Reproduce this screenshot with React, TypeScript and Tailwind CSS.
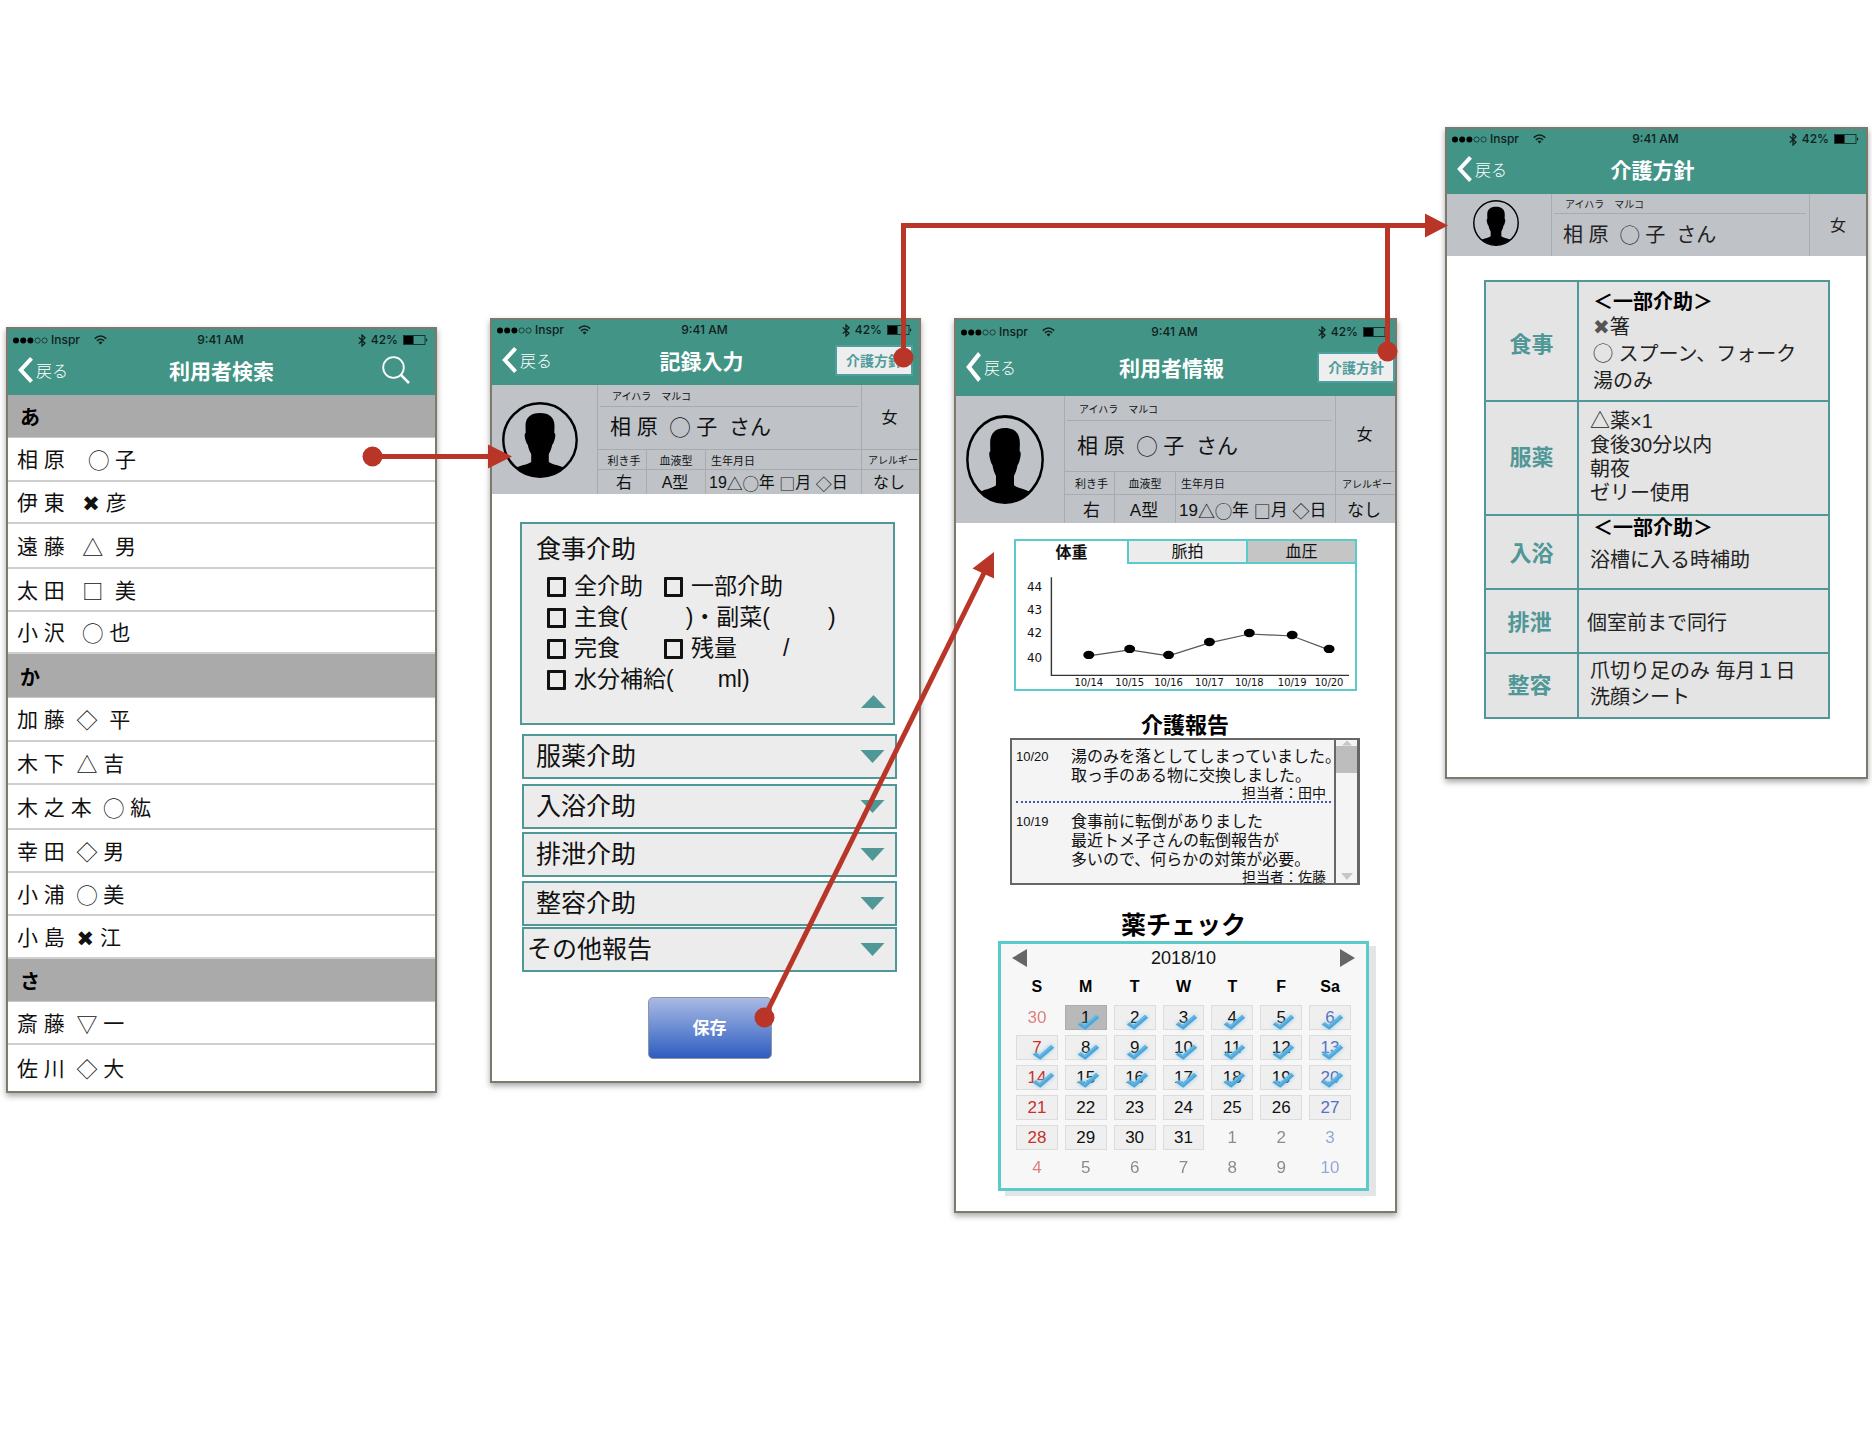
import React, { useId, useState } from "react";

const LATIN = "font-['Liberation_Sans','Noto_Sans_CJK_JP',sans-serif]";
const GLYPHS = "font-['Noto_Sans_CJK_JP','DejaVu_Sans',sans-serif]";
const FRAME = "flex flex-col border-2 border-[#7d796d] bg-white shadow-[0_3px_6px_rgba(0,0,0,0.35)]";

/* Placeholder symbols in names and dates are drawn from the Japanese face. */
function Marked({ text }: { text: string }) {
  return (
    <>
      {text.split(/([◯△□◇▽✖])/).map((part, i) =>
        /[◯△□◇▽✖]/.test(part) ? (
          <span key={i} className={GLYPHS}>
            {part}
          </span>
        ) : (
          part
        ),
      )}
    </>
  );
}

function StatusBar() {
  return (
    <div className="grid grid-cols-[1fr_auto_1fr] items-center pr-[7px] pl-[5px] font-['Inter',sans-serif] text-[12px] leading-[16px] font-medium text-[#10201d]">
      <div className="flex items-center">
        <svg viewBox="0 0 35 7" className="mr-[3px] h-[7px] w-[35px]" aria-hidden="true">
          <circle cx="3" cy="3.5" r="3" />
          <circle cx="10.2" cy="3.5" r="3" />
          <circle cx="17.4" cy="3.5" r="3" />
          <circle cx="24.6" cy="3.5" r="2.6" fill="none" stroke="currentColor" strokeWidth="0.7" />
          <circle cx="31.6" cy="3.5" r="2.6" fill="none" stroke="currentColor" strokeWidth="0.7" />
        </svg>
        Inspr
        <svg viewBox="0 0 13 10" className="ml-[14px] h-[10px] w-[13px]" fill="none" stroke="currentColor" strokeWidth="1.6" aria-hidden="true">
          <path d="M0.8 3.6Q6.5-1.6 12.2 3.6" />
          <path d="M2.9 5.9Q6.5 2.6 10.1 5.9" />
          <path d="M6.5 9.6L4.5 7.4Q6.5 5.8 8.5 7.4Z" fill="currentColor" stroke="none" />
        </svg>
      </div>
      <span>9:41 AM</span>
      <div className="flex items-center justify-end">
        <svg viewBox="0 0 8 13" className="mr-[5px] h-[13px] w-[8px]" fill="none" stroke="currentColor" strokeWidth="1.3" aria-hidden="true">
          <path d="M0.8 3.4L7 9.2L4 12V1L7 3.8L0.8 9.6" />
        </svg>
        42%
        <svg viewBox="0 0 25 10" className="ml-[5px] h-[10px] w-[25px]" aria-hidden="true">
          <rect x="0.5" y="0.5" width="21.5" height="9" fill="none" stroke="currentColor" strokeWidth="0.8" />
          <rect x="1" y="1" width="9.5" height="8" fill="#000" />
          <path d="M23.2 3.2Q25.4 5 23.2 6.8Z" />
        </svg>
      </div>
    </div>
  );
}

function TopBar({
  title,
  tall,
  offset,
  children,
}: {
  title: string;
  tall?: boolean;
  offset?: boolean;
  children?: React.ReactNode;
}) {
  return (
    <header className={`flex flex-col bg-[#429486] ${tall ? "h-[76px] pt-[4px] pb-[2px]" : offset ? "h-[65px] pt-[2px] pb-[3px]" : "h-[66px] pt-[3px] pb-[3px]"}`}>
      <StatusBar />
      <div className="grid flex-1 grid-cols-[1fr_auto_1fr] items-center text-white">
        <a href="#back" className="flex items-center gap-[3px] pl-[10px] text-[16px] leading-none font-light">
          <svg viewBox="0 0 15 26" preserveAspectRatio="none" className={`w-[15px] ${tall ? "h-[30px]" : "h-[26px]"}`} fill="none" stroke="#fff" strokeWidth="4" aria-hidden="true">
            <path d="M13.5 1.4L2.8 13L13.5 24.6" />
          </svg>
          戻る
        </a>
        <h1 className={`text-[21px] leading-none font-bold ${offset ? "pr-2" : ""}`}>{title}</h1>
        <div className="flex justify-end">{children}</div>
      </div>
    </header>
  );
}

function PolicyButton() {
  return (
    <button type="button" className="h-[31px] w-[78px] border-2 border-[#4d9fa0] bg-[#eeeeee] text-[14px] leading-none font-bold text-[#4f9d9b]">
      介護方針
    </button>
  );
}

function Avatar({ className }: { className: string }) {
  const clip = useId();
  return (
    <svg viewBox="0 0 76 76" preserveAspectRatio="none" className={className} role="img" aria-label="相原さん">
      <clipPath id={clip}>
        <circle cx="38" cy="38" r="36.5" />
      </clipPath>
      <g clipPath={`url(#${clip})`}>
        <path d="M38 11C47 11 52.500 15 52.500 24L52.300 31C53.800 31.500 53.600 35 52 39.500C51.300 41.500 50.800 42 50.200 43C49.500 47 48 50 46.800 52V60C50 62.500 56 63 62 65.500V80H14V65.500C20 63 26 62.500 29.200 60V52C28 50 26.500 47 25.800 43C25.200 42 24.700 41.500 24 39.500C22.400 35 22.200 31.500 23.700 31L23.500 24C23.500 15 29 11 38 11Z" />
      </g>
      <circle cx="38" cy="38" r="36.7" fill="none" stroke="#000" strokeWidth="2.4" />
    </svg>
  );
}

const LINE = "border-[#a9acaf]";

/* Detailed profile band: picture, name, gender and the four attributes. */
function Profile({ tall }: { tall?: boolean }) {
  const label = `border-t border-l ${LINE} flex items-center pt-[3px] leading-none whitespace-nowrap`;
  const value = `border-t border-l ${LINE} flex items-center pt-[2px] leading-none whitespace-pre ${tall ? "text-[17px]" : "text-[16px]"}`;
  return (
    <section
      className={`grid bg-[#bfc3c8] text-[#111] ${LATIN} ${
        tall
          ? "grid-cols-[108px_50px_61px_160px_1fr] grid-rows-[75px_23px_29px]"
          : "grid-cols-[105px_49px_59px_156px_1fr] grid-rows-[64px_20px_25px]"
      }`}
    >
      <div className="row-span-3 flex items-center pl-[10px]">
        <Avatar className={tall ? "h-[89px] w-[78px]" : "h-[76px] w-[76px]"} />
      </div>
      <div className={`col-span-3 flex flex-col border-l ${LINE}`}>
        <div className={`mr-[3px] ml-[2px] flex items-center border-b pt-[3px] pl-[12px] text-[10px] leading-none ${LINE} ${tall ? "h-[25px]" : "h-[22px]"}`}>
          アイハラ　マルコ
        </div>
        <div className={`flex flex-1 items-center pl-[12px] text-[21px] leading-none whitespace-pre ${tall ? "pb-[2px]" : "pb-[4px]"}`}>
          <Marked text="相 原  ◯ 子  さん" />
        </div>
      </div>
      <div className={`flex items-center justify-center border-l pt-[2px] pr-[2px] text-[16px] ${LINE}`}>女</div>
      <div className={`${label} justify-center pl-[4px] text-[11px]`}>利き手</div>
      <div className={`${label} justify-center text-[11px]`}>血液型</div>
      <div className={`${label} pl-[5px] text-[11px]`}>生年月日</div>
      <div className={`${label} pl-[6px] text-[10px]`}>アレルギー</div>
      <div className={`${value} justify-center pl-[4px]`}>右</div>
      <div className={`${value} justify-center pr-[2px]`}>A型</div>
      <div className={`${value} pl-[3px]`}>
        <Marked text="19△◯年 □月 ◇日" />
      </div>
      <div className={`${value} justify-center pr-[3px]`}>なし</div>
    </section>
  );
}

type Row = { head?: string; name?: string; size: string };
const ROWS: Row[] = [
  { head: "あ", size: "h-[43px]" },
  { name: "相 原    ◯ 子", size: "h-[44px]" },
  { name: "伊 東   ✖ 彦", size: "h-[42px]" },
  { name: "遠 藤   △  男", size: "h-[45px]" },
  { name: "太 田   □  美", size: "h-[43px]" },
  { name: "小 沢   ◯ 也", size: "h-[42px]" },
  { head: "か", size: "h-[44px]" },
  { name: "加 藤  ◇  平", size: "h-[44px]" },
  { name: "木 下  △ 吉", size: "h-[43px]" },
  { name: "木 之 本  ◯ 紘", size: "h-[45px]" },
  { name: "幸 田  ◇ 男", size: "h-[43px]" },
  { name: "小 浦  ◯ 美", size: "h-[43px]" },
  { name: "小 島  ✖ 江", size: "h-[43px]" },
  { head: "さ", size: "h-[43px]" },
  { name: "斎 藤  ▽ 一", size: "h-[43px]" },
  { name: "佐 川  ◇ 大", size: "h-[45px]" },
];

function SearchScreen() {
  return (
    <article className={FRAME}>
      <TopBar title="利用者検索">
        <button type="button" aria-label="検索" className="mr-[25px]">
          <svg viewBox="0 0 28 28" className="h-[28px] w-[28px]" fill="none" stroke="#fff" aria-hidden="true">
            <circle cx="11.500" cy="11.500" r="10.300" strokeWidth="1.800" />
            <path d="M18.600 18.600L27 27" strokeWidth="2.600" />
          </svg>
        </button>
      </TopBar>
      <ul className={`pb-px text-[#111] ${LATIN}`}>
        {ROWS.map((row, i) =>
          row.head ? (
            <li key={i} className={`flex items-center border-b border-[#c8c8c8] bg-[#aaaaaa] pt-[4px] pl-[12px] text-[20px] leading-none font-bold text-black ${row.size}`}>
              {row.head}
            </li>
          ) : (
            <li key={i} className={`flex items-center border-b-2 border-[#cfcfcf] pt-px pl-[9px] text-[21px] leading-none whitespace-pre last:border-b-0 ${row.size}`}>
              <Marked text={row.name ?? ""} />
            </li>
          ),
        )}
      </ul>
    </article>
  );
}

function Check({ children }: { children: React.ReactNode }) {
  return (
    <label className="flex items-center gap-[8px]">
      <input type="checkbox" className="h-[20px] w-[19px] appearance-none rounded-[1px] border-[3px] border-[#111] checked:bg-[#509797]" />
      <span>{children}</span>
    </label>
  );
}

function Blank({ label, className }: { label: string; className: string }) {
  return <input type="text" aria-label={label} className={`h-[22px] bg-transparent px-1 outline-none ${className}`} />;
}

function Triangle({ up }: { up?: boolean }) {
  return (
    <svg viewBox="0 0 25 13" className="h-[13px] w-[25px]" fill="#509797" aria-hidden="true">
      <path d={up ? "M12.500 0L25 13H0Z" : "M0.500 0H24.500L12.500 13Z"} />
    </svg>
  );
}

function RecordScreen() {
  const item = "flex h-[45px] items-center justify-between border-2 border-[#509797] bg-[#ececec] pr-[10px] text-left text-[25px] leading-none";
  return (
    <article className={FRAME}>
      <TopBar title="記録入力" offset>
        <div className="pr-[6px]">
          <PolicyButton />
        </div>
      </TopBar>
      <Profile />
      <form className={`flex flex-col pt-[28px] pr-[22px] pb-[22px] pl-[30px] text-[#111] ${LATIN}`} onSubmit={(e) => e.preventDefault()}>
        <fieldset className="mr-[2px] -ml-[2px] flex h-[203px] flex-col border-2 border-[#509797] bg-[#ececec] pt-[8px] pl-[14px]">
          <div className="flex h-[34px] items-center text-[25px] leading-none">食事介助</div>
          <div className="flex flex-col pt-[5px] pl-[11px] text-[23px] leading-[31px]">
            <div className="flex">
              <div className="w-[117px]">
                <Check>全介助</Check>
              </div>
              <Check>一部介助</Check>
            </div>
            <div className="flex items-center">
              <Check>主食(</Check>
              <Blank label="主食" className="w-[58px]" />
              <span>)・副菜(</span>
              <Blank label="副菜" className="w-[58px]" />
              <span>)</span>
            </div>
            <div className="flex">
              <div className="w-[117px]">
                <Check>完食</Check>
              </div>
              <Check>残量</Check>
              <Blank label="残量" className="w-[46px]" />
              <span>/</span>
            </div>
            <div className="flex items-center">
              <Check>水分補給(</Check>
              <Blank label="水分補給" className="w-[44px]" />
              <span>ml)</span>
            </div>
          </div>
          <button type="button" aria-label="閉じる" className="mt-auto mr-[7px] mb-[8px] flex self-end">
            <Triangle up />
          </button>
        </fieldset>
        <button type="button" className={`${item} mt-[9px] pl-[12px]`}>
          服薬介助
          <Triangle />
        </button>
        <button type="button" className={`${item} mt-[5px] pl-[12px]`}>
          入浴介助
          <Triangle />
        </button>
        <button type="button" className={`${item} mt-[3px] pl-[12px]`}>
          排泄介助
          <Triangle />
        </button>
        <button type="button" className={`${item} mt-[4px] pl-[12px]`}>
          整容介助
          <Triangle />
        </button>
        <button type="button" className={`${item} mt-px pl-[3px]`}>
          その他報告
          <Triangle />
        </button>
        <button
          type="submit"
          className="mt-[25px] flex h-[62px] w-[124px] items-center justify-center self-center rounded-[5px] border border-[#8f95a5] bg-linear-to-b from-[#a9bae3] to-[#2f5cc0] text-[17px] leading-none font-bold text-white"
        >
          保存
        </button>
      </form>
    </article>
  );
}

const POINTS = [
  { day: "10/14", x: 73, y: 91 },
  { day: "10/15", x: 114, y: 85 },
  { day: "10/16", x: 153, y: 91 },
  { day: "10/17", x: 194, y: 78 },
  { day: "10/18", x: 234, y: 69 },
  { day: "10/19", x: 277, y: 71 },
  { day: "10/20", x: 314, y: 85 },
];
const SCALE = [
  { kg: "44", y: 23 },
  { kg: "43", y: 46 },
  { kg: "42", y: 69 },
  { kg: "40", y: 94 },
];

function WeightChart() {
  return (
    <div className="border-2 border-t-0 border-[#5bcaca] bg-white">
      <svg viewBox="0 0 340 125" className="h-[125px] w-full" role="img" aria-label="体重の推移">
        <path d="M35.500 13V111.500H334" fill="none" stroke="#333" strokeWidth="1.400" />
        <polyline points={POINTS.map((p) => `${p.x},${p.y + 1}`).join(" ")} fill="none" stroke="#555" strokeWidth="1.200" />
        {POINTS.map((p) => (
          <ellipse key={p.day} cx={p.x} cy={p.y} rx="5.500" ry="4.200" fill="#000" />
        ))}
        <g className="font-['DejaVu_Sans',sans-serif] text-[10px]" textAnchor="middle" fill="#111">
          {POINTS.map((p) => (
            <text key={p.day} x={p.x} y="122">
              {p.day}
            </text>
          ))}
        </g>
        <g className="font-['DejaVu_Sans',sans-serif] text-[12px]" fill="#111">
          {SCALE.map((s) => (
            <text key={s.kg} x="11" y={s.y + 4}>
              {s.kg}
            </text>
          ))}
        </g>
      </svg>
    </div>
  );
}

const SUN = "text-[#c8302c]";
const SAT = "text-[#5272c4]";
const WEEKS = [
  [30, 1, 2, 3, 4, 5, 6],
  [7, 8, 9, 10, 11, 12, 13],
  [14, 15, 16, 17, 18, 19, 20],
  [21, 22, 23, 24, 25, 26, 27],
  [28, 29, 30, 31, 1, 2, 3],
  [4, 5, 6, 7, 8, 9, 10],
];

function MedicineCalendar() {
  return (
    <div className="border-[3px] border-[#5bcaca] bg-[#f7f7f7] px-[8px] pt-[3px] pb-[3px] shadow-[7px_5px_0_#e4e4e4]">
      <div className="flex h-[21px] items-center justify-between px-[3px] text-[18px] leading-none">
        <button type="button" aria-label="前の月">
          <svg viewBox="0 0 15 18" className="h-[18px] w-[15px]" fill="#666" aria-hidden="true">
            <path d="M15 0V18L0 9Z" />
          </svg>
        </button>
        <span>2018/10</span>
        <button type="button" aria-label="次の月">
          <svg viewBox="0 0 15 18" className="h-[18px] w-[15px]" fill="#666" aria-hidden="true">
            <path d="M0 0V18L15 9Z" />
          </svg>
        </button>
      </div>
      <table className="w-full table-fixed border-separate border-spacing-x-[7px] border-spacing-y-[5px] text-center text-[17px] leading-none">
        <thead>
          <tr className="h-[27px] text-[16px] text-black">
            {["S", "M", "T", "W", "T", "F", "Sa"].map((d, i) => (
              <th key={i} scope="col" className="p-0 font-bold">
                {d}
              </th>
            ))}
          </tr>
        </thead>
        <tbody>
          {WEEKS.map((week, w) => (
            <tr key={w} className="h-[25px]">
              {week.map((day, d) => {
                const outside = (w === 0 && day > 20) || (w > 3 && day < 20);
                const taken = w < 3 && !outside;
                const today = w === 0 && day === 1;
                const box = outside
                  ? "opacity-60"
                  : today
                    ? "bg-[#b9b9b9] shadow-[inset_0_0_0_1px_#adadad]"
                    : "bg-[#efefef] shadow-[inset_0_0_0_1px_#dcdcdc]";
                const tone = d === 0 ? SUN : d === 6 ? SAT : outside ? "text-[#444]" : "text-[#111]";
                return (
                  <td key={d} className={`relative p-0 ${box} ${tone}`}>
                    {day}
                    {taken && (
                      <svg
                        viewBox="0 0 24 17"
                        className={`absolute h-[17px] w-[24px] drop-shadow-[0_0_2px_rgba(120,195,235,0.8)] ${w === 2 ? "top-[7px]" : "top-[9px]"} ${d === 0 ? "left-[16px]" : "left-[12px]"}`}
                        aria-label="服薬済み"
                      >
                        <path d="M0.700 10.500L3.800 8.200L7.600 11L19 1L22.200 3.800L8.300 15.800Z" fill="#4fa6d8" />
                        <path d="M0.700 10.500L3.800 8.200L7.600 11L19 1L20.400 2.200L7.900 13L4 10Z" fill="#66b8e2" />
                      </svg>
                    )}
                  </td>
                );
              })}
            </tr>
          ))}
        </tbody>
      </table>
    </div>
  );
}

function Report({ date, lines, author }: { date: string; lines: string[]; author: string }) {
  return (
    <div className="grid grid-cols-[55px_minmax(0,1fr)] whitespace-nowrap">
      <time className="text-[13px] leading-[19px]">{date}</time>
      <div>
        {lines.map((line) => (
          <p key={line} className="text-[16px] leading-[19px]">
            {line}
          </p>
        ))}
        <p className="pr-[8px] text-right text-[14px] leading-[16px]">担当者：{author}</p>
      </div>
    </div>
  );
}

function InfoScreen() {
  const [tab, setTab] = useState(0);
  const tabs = [
    { name: "体重", look: "bg-white font-bold" },
    { name: "脈拍", look: "border-b-2 border-l-2 bg-[#ececec]" },
    { name: "血圧", look: "border-b-2 border-l-2 bg-[#c5c5c5]" },
  ];
  return (
    <article className={FRAME}>
      <TopBar title="利用者情報" tall offset>
        <PolicyButton />
      </TopBar>
      <Profile tall />
      <div className={`flex flex-col text-[#111] ${LATIN}`}>
        <section className="mt-[16px] mr-[38px] ml-[58px]">
          <div role="tablist" className="grid grid-cols-[111px_119px_1fr] border-x-2 border-t-2 border-[#5bcaca]">
            {tabs.map((t, i) => (
              <button key={t.name} type="button" role="tab" aria-selected={tab === i} onClick={() => setTab(i)} className={`h-[23px] border-[#5bcaca] text-[16px] leading-none ${t.look}`}>
                {t.name}
              </button>
            ))}
          </div>
          <WeightChart />
        </section>
        <section className="mt-[22px] mr-[35px] ml-[54px]">
          <h2 className="text-center text-[22px] leading-[25px] font-bold text-black">介護報告</h2>
          <div className="flex h-[147px] border-2 border-r-[3px] border-[#666] bg-[#f4f4f4]">
            <div className="min-w-0 flex-1 pt-[7px] pl-[4px]">
              <Report date="10/20" lines={["湯のみを落としてしまっていました。", "取っ手のある物に交換しました。"]} author="田中" />
              <div className="mr-[3px] mb-[9px] border-b-2 border-dotted border-[#4658a0]" />
              <Report date="10/19" lines={["食事前に転倒がありました", "最近トメ子さんの転倒報告が", "多いので、何らかの対策が必要。"]} author="佐藤" />
            </div>
            <div className="flex w-[23px] shrink-0 flex-col items-center border-l-2 border-[#666]">
              <svg viewBox="0 0 10 5" className="h-[6px] w-[10px]" fill="#c6c6c6" aria-hidden="true">
                <path d="M5 0L10 5H0Z" />
              </svg>
              <div className="h-[27px] w-full bg-[#bdbdbd]" />
              <svg viewBox="0 0 12 7" className="mt-auto mb-[3px] h-[7px] w-[12px]" fill="#c6c6c6" aria-hidden="true">
                <path d="M0 0H12L6 7Z" />
              </svg>
            </div>
          </div>
        </section>
        <section className="mt-[24px] mr-[26px] mb-[20px] ml-[42px]">
          <h2 className="text-center text-[25px] leading-[32px] font-bold text-black">薬チェック</h2>
          <MedicineCalendar />
        </section>
      </div>
    </article>
  );
}

function PolicyScreen() {
  const th = "border-2 border-[#509797] p-0 text-center text-[22px] leading-none font-bold text-[#509797]";
  const td = "border-2 border-[#509797] p-0 pl-[11px] text-[20px] whitespace-pre";
  return (
    <article className={FRAME}>
      <TopBar title="介護方針" offset />
      <section className={`grid h-[62px] grid-cols-[104px_1fr_57px] bg-[#bfc3c8] text-[#222] ${LATIN}`}>
        <div className="flex items-center justify-center pr-[6px] pb-[4px]">
          <Avatar className="h-[46px] w-[46px]" />
        </div>
        <div className={`flex flex-col border-l ${LINE}`}>
          <div className={`mr-[3px] ml-[2px] flex h-[20px] items-center border-b pt-[3px] pl-[11px] text-[10px] leading-none ${LINE}`}>アイハラ　マルコ</div>
          <div className="flex flex-1 items-center pb-px pl-[11px] text-[20px] leading-none whitespace-pre">
            <Marked text="相 原  ◯ 子  さん" />
          </div>
        </div>
        <div className={`flex items-center justify-center border-l pt-[2px] text-[16px] ${LINE}`}>女</div>
      </section>
      <table className={`mr-[36px] ml-[37px] mt-[24px] table-fixed border-collapse bg-[#e4e4e4] text-[#222] ${LATIN}`}>
        <colgroup>
          <col className="w-[93px]" />
          <col />
        </colgroup>
        <tbody>
          <tr className="h-[120px]">
            <th scope="row" className={`${th} pt-[8px]`}>食事</th>
            <td className={`${td} pt-[3px] leading-[24px]`}>
              <div className="pl-[3px]">
                <strong className="block text-black">＜一部介助＞</strong>
                <div>
                  <span className={`text-[#555] ${GLYPHS}`}>✖</span>箸
                </div>
                <div className="leading-[27px]">
                  <Marked text="◯ スプーン、フォーク" />
                </div>
                <div className="leading-[27px]">湯のみ</div>
              </div>
            </td>
          </tr>
          <tr className="h-[114px]">
            <th scope="row" className={th}>服薬</th>
            <td className={`${td} pb-[3px] leading-[24px]`}>
              <div>
                <Marked text="△薬×1" />
              </div>
              <div>食後30分以内</div>
              <div>朝夜</div>
              <div>ゼリー使用</div>
            </td>
          </tr>
          <tr className="h-[74px]">
            <th scope="row" className={`${th} pt-[4px]`}>入浴</th>
            <td className={`${td} align-top leading-[24px]`}>
              <strong className="block pl-[3px] text-black">＜一部介助＞</strong>
              <div className="mt-[8px]">浴槽に入る時補助</div>
            </td>
          </tr>
          <tr className="h-[64px]">
            <th scope="row" className={`${th} pt-[4px] pr-[4px]`}>排泄</th>
            <td className="border-2 border-[#509797] p-0 pt-[3px] pl-[8px] text-[20px] leading-[24px]">個室前まで同行</td>
          </tr>
          <tr className="h-[65px]">
            <th scope="row" className={`${th} pr-[4px]`}>整容</th>
            <td className={`${td} pb-[4px] leading-[26px]`}>
              <div>爪切り足のみ 毎月１日</div>
              <div>洗顔シート</div>
            </td>
          </tr>
        </tbody>
      </table>
      <div className="h-[58px]" />
    </article>
  );
}

/* Transitions between the screens, drawn over the whole board. */
function Flow() {
  return (
    <svg viewBox="0 0 1872 1439" className="pointer-events-none absolute top-0 left-0 h-[1439px] w-[1872px]" fill="none" stroke="#b93528" strokeWidth="5" aria-hidden="true">
      <path d="M372 456.500H490" />
      <path d="M903.500 357V225.500H1428" />
      <path d="M1387.500 351V225.500" />
      <path d="M764 1018L985 571" />
      <g fill="#b93528" stroke="none">
        <circle cx="372.500" cy="456.500" r="10" />
        <circle cx="903.500" cy="357.500" r="10" />
        <circle cx="1387.500" cy="351.500" r="10" />
        <circle cx="764.500" cy="1017.500" r="10" />
        <path d="M488 444.500L512 456.500L488 468.500Z" />
        <path d="M1425 213.500L1448 225.500L1425 237.500Z" />
        <path d="M994 552L972.500 568.500L994 578.500Z" />
      </g>
    </svg>
  );
}

export default function App() {
  return (
    <main className="relative min-h-[1439px] min-w-[1872px] overflow-hidden bg-white font-['Noto_Sans_CJK_JP',sans-serif]">
      <div className="absolute top-[327px] left-[6px] w-[431px]">
        <SearchScreen />
      </div>
      <div className="absolute top-[318px] left-[490px] w-[431px]">
        <RecordScreen />
      </div>
      <div className="absolute top-[318px] left-[954px] w-[443px]">
        <InfoScreen />
      </div>
      <div className="absolute top-[127px] left-[1445px] w-[423px]">
        <PolicyScreen />
      </div>
      <Flow />
    </main>
  );
}
